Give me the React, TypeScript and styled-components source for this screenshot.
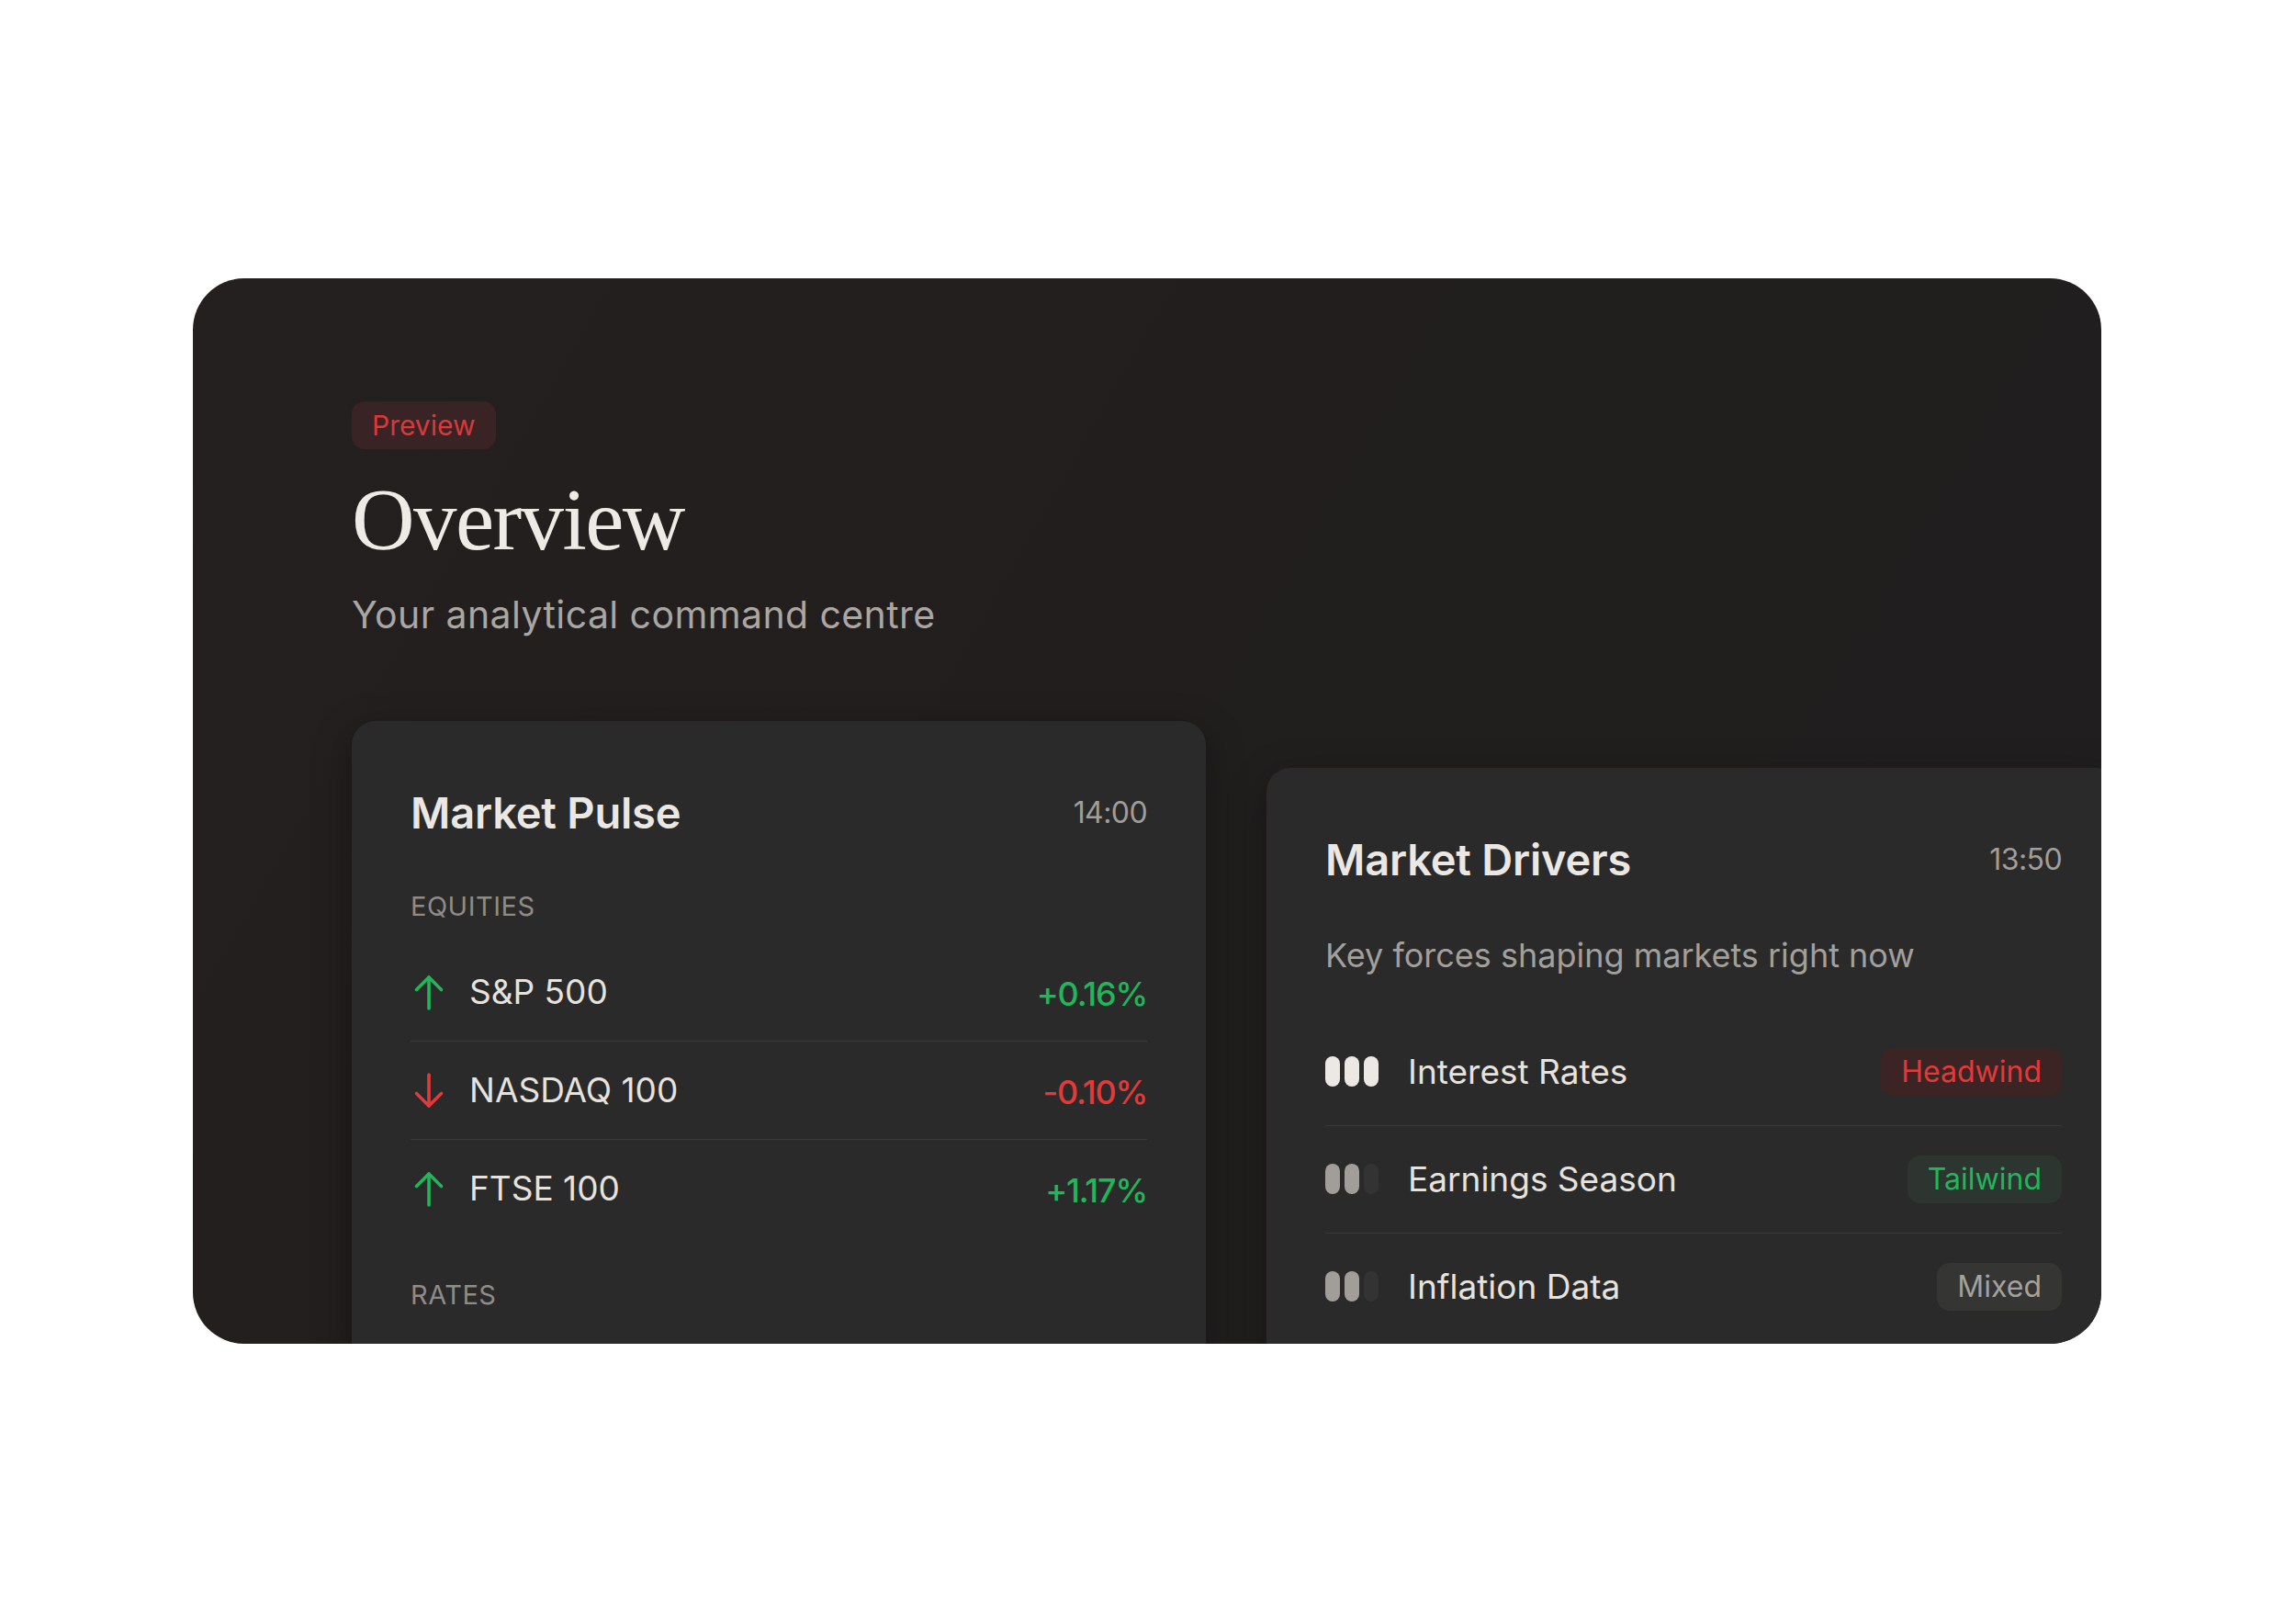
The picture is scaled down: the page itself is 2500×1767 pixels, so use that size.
import { FC } from 'react'
import styled, { createGlobalStyle, css } from 'styled-components'

const GlobalStyle = createGlobalStyle`
  html, body {
    margin: 0;
    padding: 0;
    background: #ffffff;
  }
  body {
    font-family: Inter, "DejaVu Sans", sans-serif;
  }
  * {
    box-sizing: border-box;
  }
`

type Tone = 'up' | 'down' | 'neutral'

const toneColor = {
  up: '#22b55a',
  down: '#e03a3a',
  neutral: '#a5a19c',
}

const Page = styled.div`
  padding: 303px 0 0 210px;
  min-height: 1767px;
`

const Frame = styled.section`
  width: 2078px;
  height: 1160px;
  border-radius: 56px;
  overflow: hidden;
  padding: 134px 0 0 173px;
  background: linear-gradient(120deg, #252020 0%, #221e1e 45%, #201e1e 100%);
`

const PreviewBadge = styled.span`
  display: inline-flex;
  align-items: center;
  height: 52px;
  padding: 0 22px;
  border-radius: 14px;
  background: #3a2324;
  color: #d8393b;
  font-size: 30px;
  line-height: 1;
`

const Title = styled.h1`
  margin: 25px 0 0;
  font-family: "Liberation Serif", "DejaVu Serif", serif;
  font-weight: 400;
  font-size: 95px;
  line-height: 1.1;
  letter-spacing: -1.6px;
  color: #eeeae6;
`

const Subtitle = styled.p`
  margin: 24px 0 0;
  font-size: 41px;
  line-height: 1.3;
  letter-spacing: 0.4px;
  color: #aaa6a1;
`

const Cards = styled.div`
  display: grid;
  grid-template-columns: 930px 930px;
  column-gap: 66px;
  align-items: start;
  margin-top: 89px;
`

const Card = styled.div<{ $offset?: number }>`
  background: #2a2a2a;
  border-radius: 26px;
  padding: 72px 64px 64px;
  box-shadow: 0 12px 40px rgba(0, 0, 0, 0.35);
  ${(p) =>
    p.$offset &&
    css`
      margin-top: ${p.$offset}px;
    `}
`

const CardHeader = styled.div`
  display: flex;
  align-items: center;
  justify-content: space-between;
  height: 55px;
`

const CardTitle = styled.h2`
  margin: 0;
  font-size: 47px;
  font-weight: 600;
  color: #ebe7e3;
  letter-spacing: -0.2px;
`

const Time = styled.span`
  font-size: 32px;
  letter-spacing: -0.6px;
  color: #a19d99;
`

const SectionLabel = styled.div<{ $gap: number }>`
  margin-top: ${(p) => p.$gap}px;
  font-size: 29px;
  line-height: 38px;
  letter-spacing: 0.5px;
  text-transform: uppercase;
  color: #8f8b87;
`

const Description = styled.p`
  margin: 52px 0 0;
  font-size: 36px;
  line-height: 50px;
  color: #a39f9a;
`

const List = styled.div<{ $gap: number }>`
  margin-top: ${(p) => p.$gap}px;
`

const Row = styled.div<{ $height: number }>`
  display: flex;
  align-items: center;
  height: ${(p) => p.$height}px;
  box-sizing: content-box;
  border-bottom: 1px solid rgba(255, 255, 255, 0.075);

  &:last-child {
    border-bottom: none;
  }
`

const RowLabel = styled.span`
  font-size: 37px;
  color: #e6e2de;
`

const Change = styled.span<{ $tone: Tone }>`
  margin-left: auto;
  font-size: 36px;
  font-weight: 500;
  letter-spacing: -1.2px;
  padding-top: 4px;
  color: ${(p) => toneColor[p.$tone]};
`

const ArrowSvg = styled.svg`
  flex: none;
  width: 40px;
  height: 40px;
  margin-right: 24px;
`

const Strength = styled.div`
  display: flex;
  gap: 5px;
  margin-right: 32px;
`

const Pill = styled.span<{ $level: 'full' | 'mid' | 'off' }>`
  width: 16px;
  height: 33px;
  border-radius: 8px;
  background: ${(p) =>
    p.$level === 'full' ? '#ece8e4' : p.$level === 'mid' ? '#a19d99' : '#333333'};
`

const ImpactBadge = styled.span<{ $tone: Tone }>`
  margin-left: auto;
  display: inline-flex;
  align-items: center;
  height: 52px;
  padding: 0 22px;
  border-radius: 14px;
  font-size: 32px;
  line-height: 1;
  color: ${(p) => toneColor[p.$tone]};
  background: ${(p) =>
    p.$tone === 'down' ? '#3c2425' : p.$tone === 'up' ? '#2c352f' : '#353534'};
`

const Arrow: FC<{ dir: 'up' | 'down' }> = ({ dir }) => (
  <ArrowSvg viewBox="0 0 40 40" fill="none">
    <g
      stroke={dir === 'up' ? toneColor.up : toneColor.down}
      strokeWidth={3.6}
      strokeLinecap="round"
      strokeLinejoin="round"
      transform={dir === 'down' ? 'rotate(180 20 20.5)' : undefined}
    >
      <path d="M20 4v34" />
      <path d="M6.5 17.5L20 4l13.5 13.5" />
    </g>
  </ArrowSvg>
)

const equities: { name: string; change: string; dir: 'up' | 'down' }[] = [
  { name: 'S&P 500', change: '+0.16%', dir: 'up' },
  { name: 'NASDAQ 100', change: '-0.10%', dir: 'down' },
  { name: 'FTSE 100', change: '+1.17%', dir: 'up' },
]

const drivers: { name: string; strength: number; impact: string; tone: Tone }[] = [
  { name: 'Interest Rates', strength: 3, impact: 'Headwind', tone: 'down' },
  { name: 'Earnings Season', strength: 2, impact: 'Tailwind', tone: 'up' },
  { name: 'Inflation Data', strength: 2, impact: 'Mixed', tone: 'neutral' },
]

const App: FC = () => {
  return (
    <Page>
      <GlobalStyle />
      <Frame>
        <PreviewBadge>Preview</PreviewBadge>
        <Title>Overview</Title>
        <Subtitle>Your analytical command centre</Subtitle>

        <Cards>
          <Card>
            <CardHeader>
              <CardTitle>Market Pulse</CardTitle>
              <Time>14:00</Time>
            </CardHeader>
            <SectionLabel $gap={56}>Equities</SectionLabel>
            <List $gap={21}>
              {equities.map((e) => (
                <Row key={e.name} $height={106}>
                  <Arrow dir={e.dir} />
                  <RowLabel>{e.name}</RowLabel>
                  <Change $tone={e.dir}>{e.change}</Change>
                </Row>
              ))}
            </List>
            <SectionLabel $gap={44}>Rates</SectionLabel>
          </Card>

          <Card $offset={51}>
            <CardHeader>
              <CardTitle>Market Drivers</CardTitle>
              <Time>13:50</Time>
            </CardHeader>
            <Description>Key forces shaping markets right now</Description>
            <List $gap={44}>
              {drivers.map((d) => (
                <Row key={d.name} $height={116}>
                  <Strength>
                    {[0, 1, 2].map((i) => (
                      <Pill
                        key={i}
                        $level={i >= d.strength ? 'off' : d.strength === 3 ? 'full' : 'mid'}
                      />
                    ))}
                  </Strength>
                  <RowLabel>{d.name}</RowLabel>
                  <ImpactBadge $tone={d.tone}>{d.impact}</ImpactBadge>
                </Row>
              ))}
            </List>
          </Card>
        </Cards>
      </Frame>
    </Page>
  )
}

export default App
